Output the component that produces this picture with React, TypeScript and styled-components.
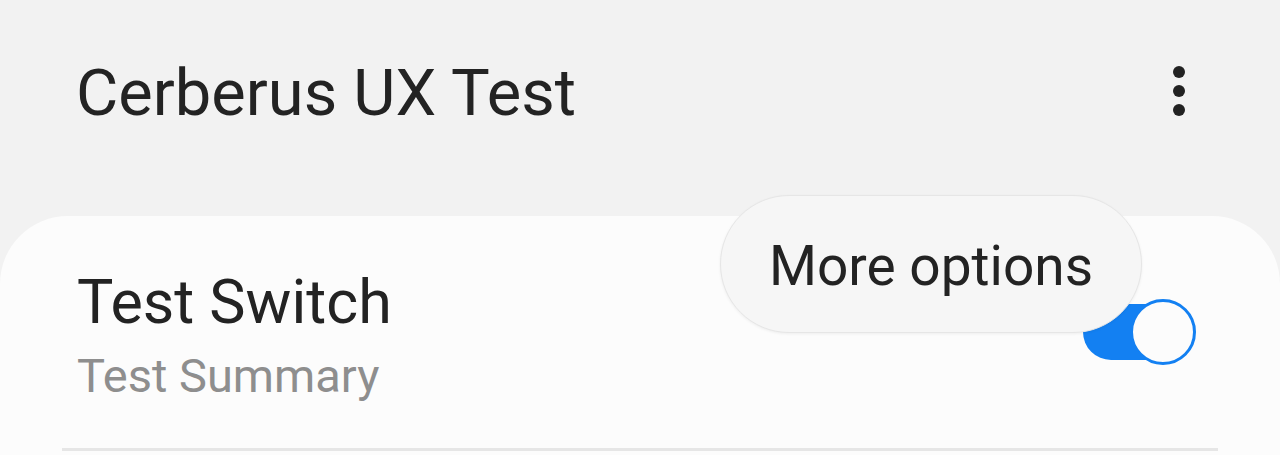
import React from "react";

import styled, { createGlobalStyle } from "styled-components";

const GlobalStyle = createGlobalStyle`
  html, body {
    margin: 0;
    padding: 0;
    background-color: #f2f2f2;
  }
  body {
    font-family: Roboto, "Noto Sans", "Liberation Sans", sans-serif;
  }
`;

const Screen = styled.div`
  position: relative;
  width: 1280px;
  height: 455px;
  overflow: hidden;
  background-color: #f2f2f2;
`;

const Header = styled.header`
  box-sizing: border-box;
  display: flex;
  align-items: flex-start;
  height: 216px;
  padding: 61px 77px 0 76px;
`;

const Title = styled.h1`
  flex: 1;
  margin: 0;
  font-size: 65px;
  line-height: 64px;
  font-weight: 400;
  color: #232323;
`;

const MenuButton = styled.button`
  display: flex;
  justify-content: center;
  width: 48px;
  height: 64px;
  padding: 0;
  border: none;
  background: transparent;
`;

const Card = styled.section`
  height: 239px;
  background-color: #fcfcfc;
  border-radius: 68px 68px 0 0;
`;

const Row = styled.div`
  display: flex;
  align-items: center;
  padding: 50px 84px 0 77px;
`;

const Texts = styled.div`
  flex: 1;
  display: flex;
  flex-direction: column;
  gap: 10px;
`;

const RowTitle = styled.div`
  font-size: 61px;
  line-height: 72px;
  color: #232323;
`;

const Summary = styled.div`
  font-size: 47px;
  line-height: 56px;
  color: #8e8e8e;
`;

const Switch = styled.div`
  position: relative;
  width: 113px;
  height: 66px;
  margin-bottom: 6px;
`;

const Track = styled.div<{ $on: boolean }>`
  position: absolute;
  left: 0;
  top: 5px;
  width: 104px;
  height: 56px;
  border-radius: 28px;
  background-color: ${(p) => (p.$on ? "#1380f2" : "#b5b5b5")};
`;

const Knob = styled.div<{ $on: boolean }>`
  position: absolute;
  top: 0;
  ${(p) => (p.$on ? "right: 0;" : "left: 0;")}
  box-sizing: border-box;
  width: 66px;
  height: 66px;
  border-radius: 50%;
  background-color: #fcfcfc;
  border: 3.5px solid ${(p) => (p.$on ? "#1380f2" : "#b5b5b5")};
`;

const Divider = styled.hr`
  margin: 44px 62px 0 62px;
  height: 3px;
  border: none;
  background-color: #e6e6e6;
`;

const Tooltip = styled.div`
  position: absolute;
  left: 720px;
  top: 195px;
  box-sizing: border-box;
  display: flex;
  align-items: center;
  justify-content: center;
  width: 422px;
  height: 138px;
  padding-top: 4px;
  border-radius: 69px;
  background-color: #f6f6f6;
  border: 1px solid #e6e6e6;
  box-shadow: 0 1px 3px rgba(0, 0, 0, 0.06);
  font-size: 55px;
  color: #232323;
`;

const KebabIcon = () => (
  <svg width="24" height="64" viewBox="0 0 24 64">
    <circle cx="12" cy="11" r="6" fill="#222" />
    <circle cx="12" cy="30" r="6" fill="#222" />
    <circle cx="12" cy="49" r="6" fill="#222" />
  </svg>
);

const App = () => {
  const on = true;
  return (
    <Screen>
      <GlobalStyle />
      <Header>
        <Title>Cerberus UX Test</Title>
        <MenuButton aria-label="More options">
          <KebabIcon />
        </MenuButton>
      </Header>
      <Card>
        <Row>
          <Texts>
            <RowTitle>Test Switch</RowTitle>
            <Summary>Test Summary</Summary>
          </Texts>
          <Switch>
            <Track $on={on} />
            <Knob $on={on} />
          </Switch>
        </Row>
        <Divider />
      </Card>
      <Tooltip>More options</Tooltip>
    </Screen>
  );
};

export default App;
